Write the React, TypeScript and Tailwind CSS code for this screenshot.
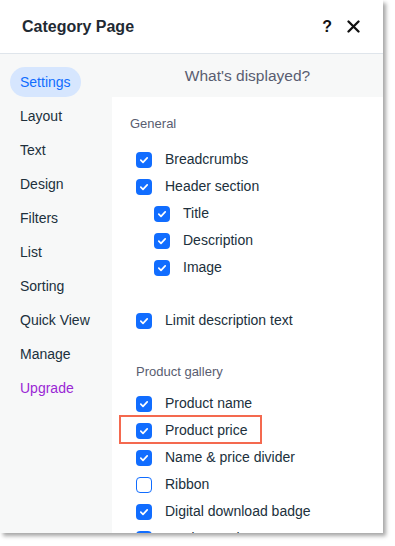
import React from 'react';

interface Option {
  label: string;
  checked: boolean;
  nested?: boolean;
  highlight?: boolean;
}

const navItems = ['Settings', 'Layout', 'Text', 'Design', 'Filters', 'List', 'Sorting', 'Quick View', 'Manage', 'Upgrade'];

const general: Option[] = [
  { label: 'Breadcrumbs', checked: true },
  { label: 'Header section', checked: true },
  { label: 'Title', checked: true, nested: true },
  { label: 'Description', checked: true, nested: true },
  { label: 'Image', checked: true, nested: true },
];

const gallery: Option[] = [
  { label: 'Product name', checked: true },
  { label: 'Product price', checked: true, highlight: true },
  { label: 'Name & price divider', checked: true },
  { label: 'Ribbon', checked: false },
  { label: 'Digital download badge', checked: true },
  { label: 'Product options', checked: true },
];

function Checkbox({ checked }: { checked: boolean }) {
  if (!checked) {
    return <span className="w-4 h-4 shrink-0 rounded-[4px] border border-[#116dff] bg-white" />;
  }
  return (
    <span className="w-4 h-4 shrink-0 rounded-[4px] bg-[#116dff] flex items-center justify-center">
      <svg width="16" height="16" viewBox="0 0 16 16" fill="none">
        <path d="M4.8 8.2 L7 10.3 L11.2 5.9" stroke="white" strokeWidth="1.7" strokeLinecap="round" strokeLinejoin="round" />
      </svg>
    </span>
  );
}

function OptionRow({ option }: { option: Option }) {
  return (
    <div className={`relative flex items-center h-[27px] gap-[13px] ${option.nested ? 'pl-[42px]' : 'pl-6'}`}>
      <Checkbox checked={option.checked} />
      <span className="text-[14px] text-[#20303c]">{option.label}</span>
      {/* Highlight box */}
      {option.highlight && (
        <div className="absolute left-[7px] top-[-2px] w-[143px] h-[29px] border-2 border-[#f4694f]" />
      )}
    </div>
  );
}

export default function App() {
  return (
    <div className="w-[395px] h-[546px] bg-white overflow-hidden" style={{ fontFamily: '"Liberation Sans", Arial, sans-serif' }}>
      <div className="w-[383px] h-[533px] bg-white flex flex-col shadow-[3px_3px_4px_rgba(0,0,0,0.35)] overflow-hidden">
        {/* Header */}
        <div className="h-[54px] shrink-0 flex items-center justify-between pl-[22px] pr-[23px] border-b border-[#dfe5eb]">
          <span className="text-[16px] font-bold text-[#1f2a33] pt-[1px]">Category Page</span>
          <div className="flex items-center gap-[15px]">
            <span className="text-[16px] font-bold text-[#111]">?</span>
            <svg width="13" height="13" viewBox="0 0 13 13" fill="none">
              <path d="M1.5 1.5 L11.5 11.5 M11.5 1.5 L1.5 11.5" stroke="#111" strokeWidth="2.3" strokeLinecap="round" />
            </svg>
          </div>
        </div>

        <div className="flex flex-1 min-h-0">
          {/* Sidebar */}
          <nav className="w-[112px] shrink-0 bg-[#f7f8f8] pt-[13px] flex flex-col gap-[4px]">
            {navItems.map((item, i) => (
              <div
                key={item}
                className={`h-[30px] flex items-center text-[14px] ${
                  i === 0
                    ? 'ml-[10px] w-[71px] px-[10px] rounded-full bg-[#d6e6fe] text-[#116dff]'
                    : item === 'Upgrade'
                    ? 'pl-5 text-[#9a27d5]'
                    : 'pl-5 text-[#20303c]'
                }`}
              >
                {item}
              </div>
            ))}
          </nav>

          {/* Content */}
          <div className="flex-1 flex flex-col bg-[#f7f8f8]">
            <div className="h-[43px] shrink-0 flex items-center justify-center text-[15.5px] text-[#595d70]">
              What's displayed?
            </div>
            <div className="flex-1 bg-white pt-[17px]">
              <div className="pl-[18px] h-[20px] flex items-center text-[13px] text-[#595d70]">General</div>
              <div className="mt-[12px]">
                {general.map((o) => (
                  <OptionRow key={o.label} option={o} />
                ))}
              </div>
              <div className="mt-[26px]">
                <OptionRow option={{ label: 'Limit description text', checked: true }} />
              </div>
              <div className="mt-[28px] pl-6 h-[20px] flex items-center text-[13px] text-[#595d70]">Product gallery</div>
              <div className="mt-[8px]">
                {gallery.map((o) => (
                  <OptionRow key={o.label} option={o} />
                ))}
              </div>
            </div>
          </div>
        </div>
      </div>
    </div>
  );
}
